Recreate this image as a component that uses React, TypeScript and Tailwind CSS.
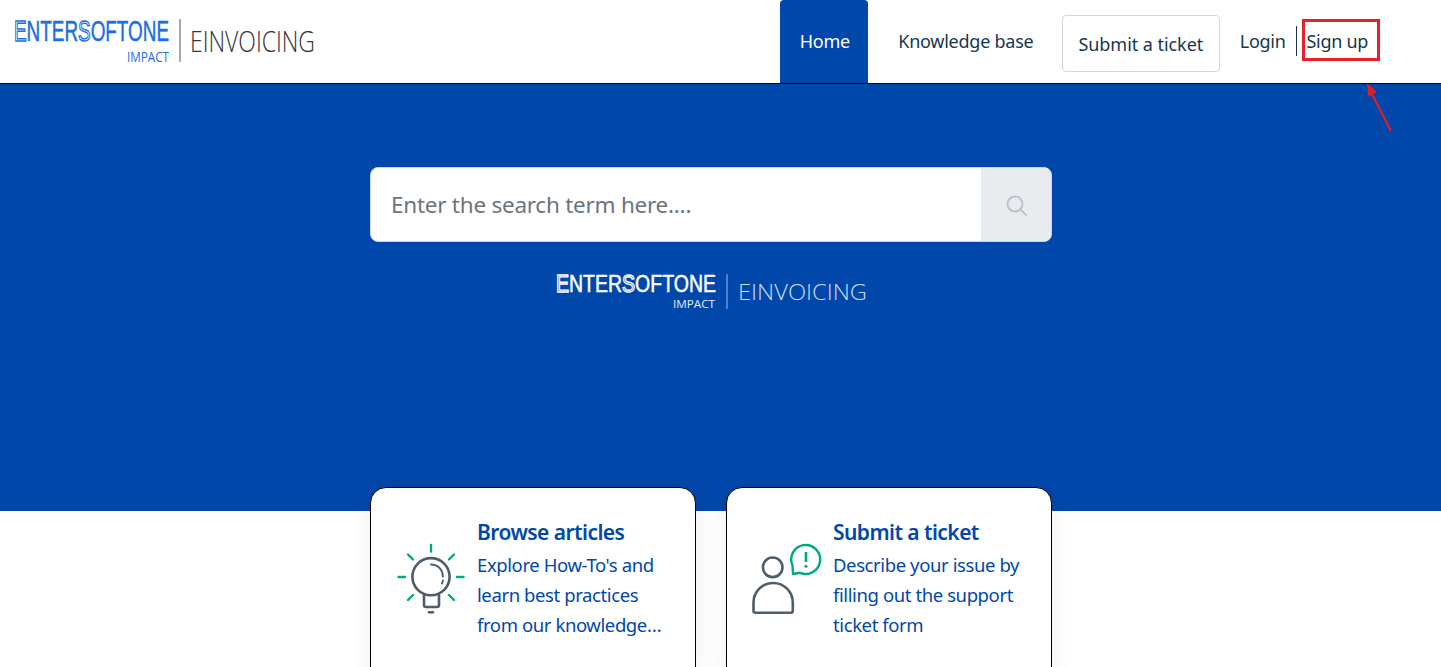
type LogoProps = {
  w: number
  h: number
  mainColor: string
  subColor: string
  lineColor: string
  wordColor: string
  mainW: number
  mainY: number
  mainSize: number
  impactX: number
  impactW: number
  impactY: number
  impactSize: number
  lineX: number
  lineY1: number
  lineY2: number
  wordX: number
  wordW: number
  wordY: number
  wordSize: number
}

function Logo(p: LogoProps) {
  return (
    <svg width={p.w} height={p.h} viewBox={`0 0 ${p.w} ${p.h}`} className="block">
      {/* E and S are outlined in the real logo, rest is solid */}
      <text
        x={0}
        y={p.mainY}
        textLength={p.mainW}
        lengthAdjust="spacingAndGlyphs"
        fontFamily="'Liberation Sans', Arial, sans-serif"
        fontSize={p.mainSize}
        fill={p.mainColor}
        stroke={p.mainColor}
        strokeWidth={0.5}
      >
        <tspan fill="none" strokeWidth={1.4}>E</tspan>
        <tspan>NTER</tspan>
        <tspan fill="none" strokeWidth={1.4}>S</tspan>
        <tspan>OFTONE</tspan>
      </text>
      <text x={p.impactX} y={p.impactY} textLength={p.impactW} lengthAdjust="spacingAndGlyphs" fontFamily="'Open Sans', sans-serif" fontSize={p.impactSize} fill={p.subColor}>IMPACT</text>
      <line x1={p.lineX} x2={p.lineX} y1={p.lineY1} y2={p.lineY2} stroke={p.lineColor} strokeWidth={1} />
      <text x={p.wordX} y={p.wordY} textLength={p.wordW} lengthAdjust="spacingAndGlyphs" fontFamily="'Open Sans', sans-serif" fontWeight={300} fontSize={p.wordSize} fill={p.wordColor}>EINVOICING</text>
    </svg>
  )
}

function BulbIcon() {
  return (
    <svg width="72" height="74" viewBox="0 0 72 74" fill="none" strokeLinecap="round" className="shrink-0">
      <g stroke="#00a881" strokeWidth="2.4">
        <path d="M36 3v6.5M3.5 35H10M62 35h6.5M13 12.5l5 5M59 12.5l-5 5M13 58l5-5M59 58l-5-5" />
      </g>
      <g stroke="#4f5d6b" strokeWidth="2.6">
        <circle cx="36" cy="34.7" r="18.6" />
        <path d="M36 22.5c6.8 0 11.8 5 11.8 12" strokeWidth="2" />
        <path d="M48 38.5l-1 3" strokeWidth="2" />
        <path d="M29 53v10a2 2 0 0 0 2 2h11a2 2 0 0 0 2-2V53" />
        <path d="M34 70.3h4" />
      </g>
    </svg>
  )
}

function TicketIcon() {
  return (
    <svg width="74" height="74" viewBox="0 0 74 74" fill="none" className="-ml-px shrink-0">
      <circle cx="22.7" cy="25.3" r="9.8" stroke="#4f5d6b" strokeWidth="2.6" />
      <path d="M3.5 60.6A19.65 19.65 0 0 1 42.8 60.6V68.8a2 2 0 0 1-2 2H5.5a2 2 0 0 1-2-2Z" stroke="#4f5d6b" strokeWidth="2.6" />
      <path d="M50 30.8A14.5 14.5 0 1 0 42.5 23.5L43 32Z" stroke="#00a881" strokeWidth="2.4" strokeLinejoin="round" />
      <path d="M56 10v10" stroke="#00a881" strokeWidth="2.6" />
      <circle cx="56" cy="24.3" r="1.5" fill="#00a881" />
    </svg>
  )
}

function ActionCard(props: { icon: React.ReactNode; title: string; text: string }) {
  return (
    <div className="flex h-[200px] w-[326px] shrink-0 rounded-[16px] border border-black bg-white pl-[24px] pr-[26px] shadow-[0_0_24px_rgba(0,0,0,0.07)]">
      <div className="w-[82px] shrink-0 pt-[54px]">{props.icon}</div>
      <div className="min-w-0 pt-[28px]">
        <h3 className="text-[21px] leading-[32px] font-semibold tracking-[-0.55px] text-[#0047ab]">{props.title}</h3>
        <p className="mt-[2px] line-clamp-3 text-[18.5px] leading-[30px] tracking-[-0.4px] text-[#0047ab]">{props.text}</p>
      </div>
    </div>
  )
}

export default function App() {
  return (
    <div className="h-[667px] overflow-hidden bg-white font-['Noto_Sans',sans-serif]">
      {/* Header */}
      <header className="relative flex h-[84px] items-start justify-between border-b border-black bg-white pl-[14px] pr-[73px]">
        <div className="pt-[18px]">
          <Logo
            w={301}
            h={46}
            mainColor="#1b6fe0"
            subColor="#1b6fe0"
            lineColor="#555555"
            wordColor="#333333"
            mainW={155}
            mainY={23}
            mainSize={29}
            impactX={113}
            impactW={42}
            impactY={44}
            impactSize={14}
            lineX={166}
            lineY1={1}
            lineY2={44}
            wordX={176}
            wordW={125}
            wordY={34}
            wordSize={30}
          />
        </div>
        <nav className="flex items-start text-[18px] tracking-[-0.3px] text-[#163650]">
          <a className="flex h-[83px] w-[88px] items-center justify-center rounded-t-[4px] bg-[#0047ab] pl-[2px] text-white">Home</a>
          <a className="flex h-[83px] w-[194px] items-center justify-center pl-[2px] tracking-[-0.25px]">Knowledge base</a>
          <a className="mt-[15px] flex h-[57px] w-[158px] items-center justify-center rounded-[4px] border border-[#cfd6e0] pt-[2px] tracking-[-0.05px]">Submit a ticket</a>
          <a className="ml-[20px] flex h-[83px] items-center">Login</a>
          <span className="ml-[10px] mt-[26px] h-[30px] w-px bg-[#163650]"></span>
          <a className="ml-[10px] flex h-[83px] items-center">Sign up</a>
        </nav>

        {/* red annotation */}
        <div className="absolute left-[1302px] top-[19px] h-[42px] w-[78px] border-[3px] border-[#e8202a]"></div>
        <svg className="absolute left-[1360px] top-[80px] z-10" width="36" height="56" viewBox="0 0 36 56" fill="none">
          <path d="M31 51L11 12" stroke="#d9202a" strokeWidth="2.2" />
          <path d="M7 3l1 14 9-5Z" fill="#d9202a" />
        </svg>
      </header>

      {/* Hero, content sits 9px left of page centre like the original (scrollbar gutter) */}
      <section className="h-[427px] bg-[#0047ab] pt-[83px]">
        <div className="ml-[370px] w-[682px]">
          <div className="flex h-[75px] overflow-hidden rounded-[8px] border border-[#ced4da] bg-white">
            <div className="flex flex-1 items-center pl-[20px] text-[22.5px] tracking-[-0.25px] text-[#6c757d]">Enter the search term here....</div>
            <div className="flex w-[70px] items-center justify-center bg-[#e9ecef]">
              <svg width="24" height="24" viewBox="0 0 24 24" fill="none" stroke="#b9c4cf" strokeWidth="2" strokeLinecap="round">
                <circle cx="11" cy="11" r="7.5" />
                <path d="M16.5 16.5L22 22" />
              </svg>
            </div>
          </div>
          <div className="mt-[30px] flex justify-center">
            <Logo
              w={311}
              h={38}
              mainColor="#ffffff"
              subColor="#e8eefb"
              lineColor="#9fbbe6"
              wordColor="#cfdcf3"
              mainW={160}
              mainY={20}
              mainSize={23.5}
              impactX={117}
              impactW={42}
              impactY={36}
              impactSize={11}
              lineX={171}
              lineY1={2}
              lineY2={37}
              wordX={182}
              wordW={129}
              wordY={28}
              wordSize={22}
            />
          </div>
        </div>
      </section>

      {/* Cards */}
      <div className="ml-[370px] mt-[-24px] flex w-[682px] justify-between">
        <ActionCard icon={<BulbIcon />} title="Browse articles" text="Explore How-To's and learn best practices from our knowledge base articles" />
        <ActionCard icon={<TicketIcon />} title="Submit a ticket" text="Describe your issue by filling out the support ticket form" />
      </div>
    </div>
  )
}
